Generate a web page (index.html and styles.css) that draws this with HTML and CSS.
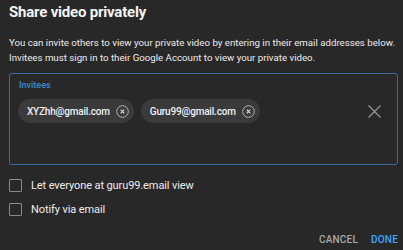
FILE: index.html
```html
<!DOCTYPE html>
<html>
<head>
<meta charset="utf-8">
<link rel="stylesheet" href="styles.css">
</head>
<body>
<div class="dialog">
  <h1 class="title">Share video privately</h1>
  <p class="desc">You can invite others to view your private video by entering in their email addresses below. Invitees must sign in to their Google Account to view your private video.</p>
  <div class="field">
    <div class="label">Invitees</div>
    <div class="chips">
      <div class="chip"><span class="chip-text">XYZhh@gmail.com</span>
        <svg class="chip-x" width="13" height="13" viewBox="0 0 13 13"><circle cx="6.5" cy="6.5" r="5.8" fill="none" stroke="#b5b5b5" stroke-width="1"/><path d="M4.7 4.7 L8.3 8.3 M8.3 4.7 L4.7 8.3" stroke="#d8d8d8" stroke-width="1.2"/></svg>
      </div>
      <div class="chip"><span class="chip-text">Guru99@gmail.com</span>
        <svg class="chip-x" width="13" height="13" viewBox="0 0 13 13"><circle cx="6.5" cy="6.5" r="5.8" fill="none" stroke="#b5b5b5" stroke-width="1"/><path d="M4.7 4.7 L8.3 8.3 M8.3 4.7 L4.7 8.3" stroke="#d8d8d8" stroke-width="1.2"/></svg>
      </div>
      <svg class="clear" width="13" height="13" viewBox="0 0 13 13"><path d="M0.5 0.5 L12.5 12.5 M12.5 0.5 L0.5 12.5" stroke="#9a9a9a" stroke-width="1.1"/></svg>
    </div>
  </div>
  <div class="options">
    <label class="option"><span class="box"></span><span>Let everyone at guru99.email view</span></label>
    <label class="option"><span class="box"></span><span>Notify via email</span></label>
  </div>
  <div class="actions">
    <span class="btn cancel">CANCEL</span>
    <span class="btn done">DONE</span>
  </div>
</div>
</body>
</html>
```
FILE: styles.css
```css
html, body {
  margin: 0;
  padding: 0;
  background: #282828;
}
body {
  width: 403px;
  height: 250px;
  overflow: hidden;
  font-family: Roboto, "Liberation Sans", sans-serif;
  color: #f1f1f1;
}
.dialog {
  padding: 2px 5px 0 9px;
}
.title {
  margin: 0;
  font-size: 15px;
  line-height: 20px;
  font-weight: 700;
  letter-spacing: -0.2px;
  color: #f4f4f4;
}
.desc {
  margin: 13px 0 0;
  font-size: 9.7px;
  line-height: 15px;
  color: #ececec;
}
.field {
  box-sizing: border-box;
  margin-top: 8px;
  height: 92px;
  border: 1px solid #3b6aa0;
  border-radius: 3px;
  padding: 5px 16px 0 8px;
}
.label {
  margin-left: 1px;
  font-size: 9px;
  line-height: 12px;
  font-weight: 500;
  color: #3d8bd6;
}
.chips {
  display: flex;
  align-items: center;
  gap: 7px;
  margin-top: 8px;
}
.chip {
  display: flex;
  align-items: center;
  height: 24px;
  padding: 0 5px 0 9px;
  border-radius: 12px;
  background: #3a3a3a;
}
.chip-text {
  font-size: 10px;
  font-weight: 500;
  letter-spacing: -0.2px;
  color: #f1f1f1;
  margin-right: 6px;
}
.chip-x {
  display: block;
}
.clear {
  margin-left: auto;
  display: block;
}
.options {
  margin-top: 14px;
  display: flex;
  flex-direction: column;
  gap: 11px;
}
.option {
  display: flex;
  align-items: center;
  font-size: 11px;
  line-height: 13px;
  letter-spacing: -0.1px;
  color: #ededed;
}
.box {
  width: 11px;
  height: 11px;
  border: 1px solid #8a8a8a;
  border-radius: 1px;
  margin-right: 9px;
}
.actions {
  display: flex;
  justify-content: flex-end;
  gap: 13px;
  margin-top: 18px;
  line-height: 12px;
}
.btn {
  font-size: 10px;
  font-weight: 500;
  letter-spacing: 0.2px;
}
.cancel {
  color: #a8a8a8;
}
.done {
  color: #3ea6ff;
}
```
